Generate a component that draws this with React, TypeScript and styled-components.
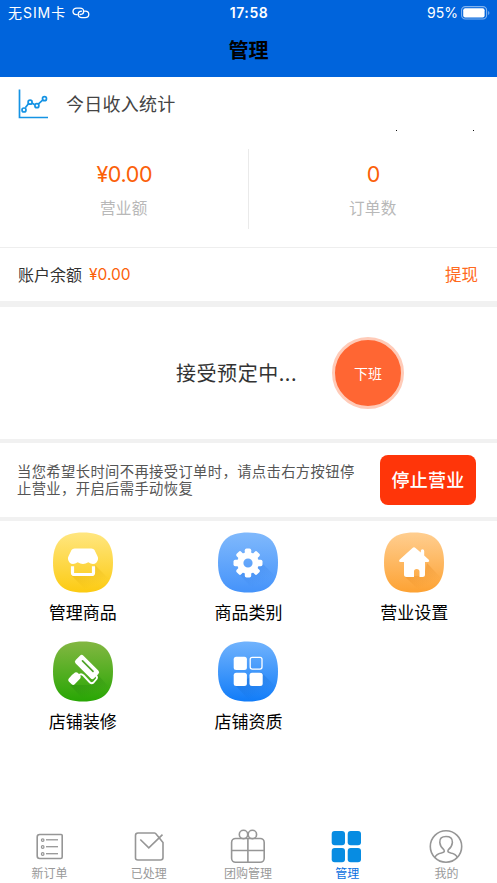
import React from "react";
import styled, { createGlobalStyle } from "styled-components";

const GlobalStyle = createGlobalStyle`
  * { box-sizing: border-box; }
  body { margin: 0; background: #fff; }
`;

const cjk = `"Noto Sans CJK SC", sans-serif`;
const latin = `Inter, "Noto Sans CJK SC", sans-serif`;

const Screen = styled.main`
  display: flex;
  flex-direction: column;
  width: 497px;
  height: 883px;
  overflow: hidden;
  background: #fff;
  color: #333;
  font-family: ${cjk};
`;

const Header = styled.header`
  height: 77px;
  flex: none;
  background: #0064dc;
`;

const StatusBar = styled.div`
  display: grid;
  grid-template-columns: 1fr auto 1fr;
  align-items: center;
  height: 26px;
  padding: 0 7px 0 8px;
  color: #fff;
  font: 400 14px/26px ${latin};
`;

const Carrier = styled.div`
  display: flex;
  align-items: center;
  gap: 6px;
  height: 26px;
  letter-spacing: 0.95px;
`;

const Clock = styled.div`
  font-weight: 600;
  letter-spacing: 0.6px;
`;

const Battery = styled.div`
  display: flex;
  justify-content: flex-end;
  align-items: center;
  gap: 3px;
  height: 26px;
`;

const PageTitle = styled.h1`
  margin: 0;
  height: 49px;
  color: #000;
  text-align: center;
  font: 700 20px/48px ${cjk};
`;

const StatsHeader = styled.section`
  display: flex;
  align-items: center;
  flex: none;
  height: 54px;
  padding-left: 18px;
  gap: 18px;
  font-size: 18px;
  letter-spacing: 0.25px;
  color: #444;
`;

const StatsTitle = styled.h2`
  margin: 0;
  height: 54px;
  font: inherit;
  line-height: 52px;
`;

const Ticks = styled.div`
  display: flex;
  align-self: flex-end;
  justify-content: space-between;
  width: 78px;
  height: 1px;
  margin: 0 23px 0 auto;
`;

const Tick = styled.i`
  width: 1px;
  height: 1px;
  background: #111;
`;

const Stats = styled.section`
  display: grid;
  grid-template-columns: 1fr 1fr;
  flex: none;
  height: 117px;
  padding: 18px 0;
  border-bottom: 1px solid #eee;
`;

const Stat = styled.div<{ $divided?: boolean }>`
  display: flex;
  flex-direction: column;
  align-items: center;
  height: 80px;
  padding-top: 10px;
  border-right: ${(p) => (p.$divided ? "1px solid #eaeaea" : "none")};
`;

const Value = styled.div`
  padding-left: 1px;
  font: 400 21.5px/30px ${latin};
  letter-spacing: -0.4px;
  color: #fb6008;
`;

const Caption = styled.div`
  margin-top: 6px;
  font-size: 15.6px;
  line-height: 24px;
  letter-spacing: 0.2px;
  color: #b8b8b8;
`;

const Balance = styled.section`
  display: flex;
  align-items: center;
  flex: none;
  height: 53px;
  padding: 0 19px 0 18px;
  font-size: 16px;
  line-height: 53px;
`;

const Amount = styled.span`
  margin-left: 7px;
  font-family: ${latin};
  font-size: 15.5px;
  color: #fb6008;
`;

const Withdraw = styled.a`
  margin-left: auto;
  font-size: 16.5px;
  color: #ff6a20;
`;

const Gap = styled.div<{ $size: number }>`
  flex: none;
  height: ${(p) => p.$size}px;
  background: #f1f1f1;
`;

const Reservation = styled.section`
  display: flex;
  align-items: center;
  flex: none;
  height: 132px;
  padding-left: 176px;
`;

const Accepting = styled.div`
  width: 156px;
  font-size: 20px;
  line-height: 30px;
  letter-spacing: 0.55px;
`;

const OffDuty = styled.button`
  width: 72px;
  height: 72px;
  padding: 0 0 1px;
  border: 3px solid #ffcbb8;
  border-radius: 50%;
  background: #ff6633;
  color: #fff;
  font: 400 14px/20px ${cjk};
`;

const Notice = styled.section`
  display: flex;
  align-items: center;
  justify-content: space-between;
  flex: none;
  height: 74px;
  padding: 0 21px 0 17px;
`;

const NoticeText = styled.p`
  margin: 0 0 3px;
  font-size: 14.3px;
  line-height: 17px;
  letter-spacing: 0.38px;
  color: #555;
  white-space: nowrap;
`;

const StopButton = styled.button`
  width: 96px;
  height: 50px;
  padding: 0 0 2px;
  border: 0;
  border-radius: 8px;
  background: #ff3509;
  color: #fff;
  font: 500 18px/48px ${cjk};
  letter-spacing: 0.3px;
`;

const Menu = styled.nav`
  display: grid;
  grid-template-columns: repeat(3, 1fr);
  grid-auto-rows: 109px;
  flex: 1;
  align-content: start;
  padding-top: 11px;
`;

const MenuItem = styled.a`
  display: flex;
  flex-direction: column;
  align-items: center;
  gap: 6px;
  font-size: 17px;
  line-height: 26px;
  color: #000;
`;

const TabBar = styled.nav`
  display: grid;
  grid-template-columns: repeat(5, 1fr);
  flex: none;
  height: 56px;
  padding-right: 1px;
`;

const Tab = styled.a<{ $active?: boolean }>`
  display: flex;
  flex-direction: column;
  align-items: center;
  font-size: 12px;
  line-height: 16px;
  color: ${(p) => (p.$active ? "#0a6fe0" : "#999")};
  svg { display: block; }
`;

const LinkGlyph = () => (
  <svg width="18" height="12" viewBox="0 0 18 12" fill="none" stroke="#fff" strokeWidth="1.3" strokeLinecap="round">
    <path d="M5.2 7.6H4.4C2.2 7.5 1 6.2 1 4.5 1 2.5 2.6 1.2 4.7 1.2H8c2.2 0 3.7 1.3 3.7 3.1 0 1.9-1.5 3.2-3.6 3.2" />
    <path d="M12.6 4.2h.8c2.1.1 3.4 1.3 3.4 3.1 0 2-1.5 3.3-3.7 3.3H9.8c-2.2 0-3.6-1.3-3.6-3.1s1.4-3.2 3.4-3.3" />
  </svg>
);

const BatteryGlyph = () => (
  <svg width="29" height="14" viewBox="0 0 29 14">
    <rect x=".6" y=".6" width="25" height="12.4" rx="3.7" fill="none" stroke="#82b3ee" strokeWidth="1.1" />
    <rect x="2.2" y="2.2" width="21.4" height="9.2" rx="2" fill="#fff" />
    <path d="M27.2 4.9c1.6.6 1.6 3.4 0 4z" fill="#82b3ee" />
  </svg>
);

const ChartGlyph = () => (
  <svg width="30" height="30" viewBox="0 0 30 30" fill="none" stroke="#1593e4" strokeWidth="1.7">
    <path d="M1.5.5v28H30" />
    <path d="M7.300 18.800l3.500-4.500M13.900 14l2.800 1.800M20.200 15.200l5-4.500" />
    <circle cx="6" cy="21" r="2" />
    <circle cx="12.100" cy="13.200" r="2" />
    <circle cx="18.900" cy="16.700" r="2" />
    <circle cx="26.500" cy="9.700" r="2" />
  </svg>
);

type TileProps = { id: string; from: string; to: string; shadow: string; shade: string; children: React.ReactNode };

const Tile = ({ id, from, to, shadow, shade, children }: TileProps) => (
  <svg width="60" height="61" viewBox="0 0 60 61">
    <defs>
      <linearGradient id={id} x1="0" y1="0" x2="0" y2="1">
        <stop stopColor={from} />
        <stop offset="1" stopColor={to} />
      </linearGradient>
      <linearGradient id={id + "-shade"} x1=".2" y1=".1" x2=".65" y2=".8">
        <stop stopColor={shade} stopOpacity=".45" />
        <stop offset="1" stopColor={shade} stopOpacity="0" />
      </linearGradient>
    </defs>
    <path d="M30 .5C51 .5 60 10 60 30.500S51 60.500 30 60.500 0 51 0 30.500 9 .5 30 .5Z" fill={`url(#${id})`} />
    <path d={shadow} fill={`url(#${id}-shade)`} />
    {children}
  </svg>
);

const ShopIcon = () => (
  <Tile id="shop" from="#ffe680" to="#fccb12" shade="#dda600" shadow="M18 43 33 58Q48 57 56 47L42 33V42Z">
    <path d="M21.500 16.500h17q2 0 3 1.500l3 6.200q.8 1.500.5 3-1 4.800-5 4.800-2.300 0-4.700-1.800-2.600 1.800-5.300 1.800t-5.300-1.800Q22.300 32 20 32q-4 0-5-4.800-.3-1.500.5-3l3-6.200q1-1.500 3-1.500Z" fill="#fff" />
    <path d="M19.500 34.200v6.500q0 1.800 1.800 1.800h17.400q1.800 0 1.800-1.800v-6.500" fill="none" stroke="#fff" strokeWidth="3.200" />
  </Tile>
);

const GearIcon = () => (
  <Tile id="gear" from="#80b9fc" to="#4593fa" shade="#337fe8" shadow="M21 42 34 56Q50 55 57 44L44 31Z">
    <g transform="translate(30 31)" fill="#fff">
      {[0, 45, 90, 135, 180, 225, 270, 315].map((a) => (
        <rect key={a} x="-3.200" y="-14.500" width="6.400" height="8" rx="1.700" transform={`rotate(${a})`} />
      ))}
      <circle r="7.700" fill="none" stroke="#fff" strokeWidth="6.200" />
    </g>
  </Tile>
);

const HouseIcon = () => (
  <Tile id="house" from="#ffce90" to="#fda233" shade="#e28012" shadow="M20 44 35 58Q50 57 57 46L43 31 40 44Z">
    <path d="M28.500 16q1.500-1.300 3 0l5.300 4.500V19q0-1.800 1.700-1.800t1.700 1.800v4.500l4.600 4.300q1.200 2-1 2.200H41v12.500q0 2.500-2.500 2.500h-3v-5.500q0-2.500-2.800-2.500T30 39.500V45h-7.500q-2.500 0-2.500-2.500V30h-3.500q-2.200-.3-1-2.300Z" fill="#fff" />
  </Tile>
);

const RollerIcon = () => (
  <Tile id="roller" from="#83b742" to="#28a604" shade="#1b7d0c" shadow="M17 44 29 57Q47 59 56 46L45 34 38 44Z">
    <path d="M25.500 34.500q2.500-2.500 5 0l6.500 7q1.800 1.500 3.500 0l3-3.500q1.200-1.800-.5-3.500" fill="none" stroke="#fff" strokeWidth="1.900" strokeLinecap="round" strokeLinejoin="round" />
    <rect x="-5.500" y="-13" width="11" height="26" rx="2.500" transform="translate(34 26) rotate(-45)" fill="#fff" />
    <path d="m29.500 19.800 10.500 10.500" stroke="#50a32a" strokeWidth="1.700" strokeLinecap="round" />
    <path d="M22 31.500q1.500-.8 2.700.3l2.500 2.500q1.200 1.700 0 3.200l-5.500 5.800q-1.500 1.500-3 0L15.800 40.500q-1.300-1.500 0-3 2.500-3.500 6.200-6Z" fill="#fff" />
  </Tile>
);

const TilesIcon = () => (
  <Tile id="tiles" from="#71b3fd" to="#117cf8" shade="#0d61c7" shadow="M17 44 31 59Q48 59 57 45L43 31Z">
    <rect x="15.700" y="15.700" width="13.200" height="13.200" rx="2.500" fill="#fff" />
    <rect x="32.200" y="16.300" width="11.800" height="11.800" rx="2" fill="none" stroke="#fff" strokeWidth="1.300" />
    <rect x="15.700" y="31.700" width="13.200" height="13.200" rx="2.500" fill="#fff" />
    <rect x="31.500" y="31.700" width="13.200" height="13.200" rx="2.500" fill="#fff" />
  </Tile>
);

const TabGlyph = ({ children }: { children: React.ReactNode }) => (
  <svg width="40" height="38" viewBox="0 0 40 38" fill="none" stroke="#969696" strokeWidth="1.600">
    {children}
  </svg>
);

const OrdersGlyph = () => (
  <TabGlyph>
    <path d="M9.700 7.500h21.500q1 0 1 1V30q0 1.500-1.500 1.500h-21Q7.200 31.500 7.200 29V10q0-2.500 2.500-2.500Z" />
    {[13.100, 20, 27].map((y) => (
      <g key={y}>
        <circle cx="12.700" cy={y} r="1.300" strokeWidth="1.200" />
        <path d={`M16 ${y - 0.300}h12`} strokeWidth="1.300" />
      </g>
    ))}
  </TabGlyph>
);

const DoneGlyph = () => (
  <TabGlyph>
    <path d="M25.500 6H9Q6.500 6 6.500 8.500V31q0 2 2.500 2h22.500q2.500 0 2.500-2.500V15.500l-6.500-8Q26.500 6 25.500 6Z" />
    <path d="m11.300 12.500 8.500 8.300L33.500 7.700" />
  </TabGlyph>
);

const GiftGlyph = () => (
  <TabGlyph>
    <rect x="3.600" y="11.500" width="32.600" height="23.800" rx="4" />
    <path d="M3.600 23.500h32.600M19.900 11.500v23.800" />
    <circle cx="15.500" cy="7.500" r="4.200" />
    <circle cx="24.400" cy="7.500" r="4.200" />
  </TabGlyph>
);

const ManageGlyph = () => (
  <TabGlyph>
    <g fill="#078ce2" stroke="none">
      <rect x="4.700" y="4" width="13.300" height="14.200" rx="3" />
      <rect x="20.700" y="4" width="13.300" height="14.200" rx="3" />
      <rect x="4.700" y="21" width="13.300" height="14.200" rx="3" />
      <rect x="20.700" y="21" width="13.300" height="14.200" rx="3" />
    </g>
  </TabGlyph>
);

const ProfileGlyph = () => (
  <TabGlyph>
    <circle cx="20" cy="19.500" r="15.700" />
    <path d="M8.900 30.500c1-2.500 4-4 6.500-4.500 3-.7 3.500-1.500 2.400-3.300-2.100-1.700-3.700-4-4-7.200C13.400 11 15.900 9.500 20 9.500S26.700 11 26.400 15.500c-.3 3.200-1.800 5.500-4 7.200-1.100 1.800-.6 2.600 2.400 3.300 2.500.5 5.500 2 6.500 4.500" />
  </TabGlyph>
);

const menu = [
  { label: "管理商品", Icon: ShopIcon },
  { label: "商品类别", Icon: GearIcon },
  { label: "营业设置", Icon: HouseIcon },
  { label: "店铺装修", Icon: RollerIcon },
  { label: "店铺资质", Icon: TilesIcon },
];

const tabs = [
  { label: "新订单", Icon: OrdersGlyph },
  { label: "已处理", Icon: DoneGlyph },
  { label: "团购管理", Icon: GiftGlyph },
  { label: "管理", Icon: ManageGlyph, active: true },
  { label: "我的", Icon: ProfileGlyph },
];

export default function App() {
  return (
    <Screen>
      <GlobalStyle />
      <Header>
        <StatusBar>
          <Carrier>无SIM卡<LinkGlyph /></Carrier>
          <Clock>17:58</Clock>
          <Battery>95%<BatteryGlyph /></Battery>
        </StatusBar>
        <PageTitle>管理</PageTitle>
      </Header>
      <StatsHeader>
        <ChartGlyph />
        <StatsTitle>今日收入统计</StatsTitle>
        <Ticks><Tick /><Tick /></Ticks>
      </StatsHeader>
      <Stats>
        <Stat $divided>
          <Value>¥0.00</Value>
          <Caption>营业额</Caption>
        </Stat>
        <Stat>
          <Value>0</Value>
          <Caption>订单数</Caption>
        </Stat>
      </Stats>
      <Balance>
        账户余额<Amount>¥0.00</Amount>
        <Withdraw>提现</Withdraw>
      </Balance>
      <Gap $size={6} />
      <Reservation>
        <Accepting>接受预定中...</Accepting>
        <OffDuty>下班</OffDuty>
      </Reservation>
      <Gap $size={4} />
      <Notice>
        <NoticeText>当您希望长时间不再接受订单时，请点击右方按钮停<br />止营业，开启后需手动恢复</NoticeText>
        <StopButton>停止营业</StopButton>
      </Notice>
      <Gap $size={4} />
      <Menu>
        {menu.map(({ label, Icon }) => (
          <MenuItem key={label}><Icon />{label}</MenuItem>
        ))}
      </Menu>
      <TabBar>
        {tabs.map(({ label, Icon, active }) => (
          <Tab key={label} $active={active}><Icon />{label}</Tab>
        ))}
      </TabBar>
    </Screen>
  );
}
